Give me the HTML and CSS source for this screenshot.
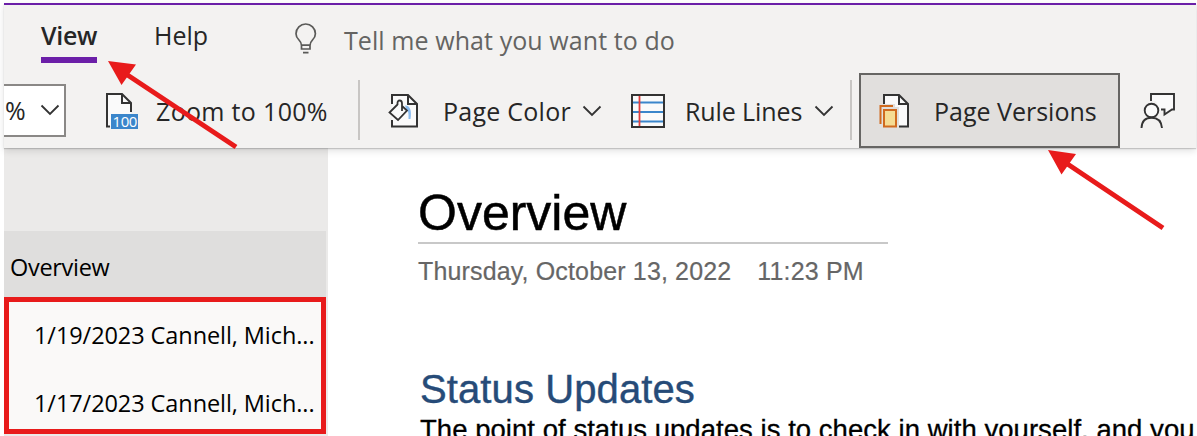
FILE: index.html
```html
<!DOCTYPE html>
<html lang="en">
<head>
<meta charset="utf-8">
<title>Overview</title>
<link rel="stylesheet" href="styles.css">
</head>
<body>
<div class="app">
  <header class="ribbon">
    <nav class="tabs">
      <a class="tab tab-active"><span class="t-view">View</span></a>
      <a class="tab tab-help"><span>Help</span></a>
      <div class="tellme">
        <svg class="bulb" width="24" height="32" viewBox="0 0 24 32" fill="none" stroke="#5a5a58" stroke-width="1.7">
          <path d="M7.500 22.500C7.500 16.500 2 17 2 10.700a9.700 9.700 0 0 1 19.400 0C21.400 17 16 16.500 16 22.500V26H7.500ZM7.500 22.200H16M9 29.700h5.500"/>
        </svg>
        <span class="t-tell">Tell me what you want to do</span>
      </div>
    </nav>
    <div class="toolbar">
      <div class="combo"><span>%</span>
        <svg width="20" height="12" viewBox="0 0 20 12" fill="none" stroke="#333" stroke-width="1.8"><path d="M1.500 1.500L10 10l8.500-8.500"/></svg>
      </div>
      <div class="tool tool-zoom">
        <svg width="34" height="38" viewBox="0 0 34 38" fill="none">
          <path d="M2 34V2H17l9 9V22H7V34Z" fill="#fafafa"/>
          <path d="M5 34.500H2V2H17l9 9V20M17 2V11H26" stroke="#333" stroke-width="2"/>
          <rect x="6" y="22" width="27" height="15" fill="#3b86cb"/>
          <text class="badge" x="7.500" y="35">100</text>
        </svg>
        <span class="t-zoom">Zoom to 100%</span>
      </div>
      <i class="sep"></i>
      <div class="tool tool-color">
        <svg width="32" height="36" viewBox="0 0 32 36" fill="none">
          <path d="M4 2H20l9 9V33H4Z" fill="#fafafa"/>
          <path d="M4 11V2H20l9 9V33.500H4V27M20 2V11H29" stroke="#333" stroke-width="2"/>
          <path d="M9 10L18 10 21.500 17.500 10 28.500 0 19.500Z" fill="#fafafa"/>
          <path d="M17 12.500Q24.500 12.500 22.500 26H20.500Q21 17.500 18.500 17Z" fill="#8abcf0"/>
          <path d="M9.500 11.500L1.500 19.500 10 27l9-9.500-5-4.500M14 18V10.500Q14 7.500 11.700 7.500T9.500 10.500V12" stroke="#333" stroke-width="1.800"/>
        </svg>
        <span class="t-color">Page Color</span>
        <svg class="chev" width="20" height="12" viewBox="0 0 20 12" fill="none" stroke="#333" stroke-width="1.800"><path d="M1.500 1.500L10 10l8.500-8.500"/></svg>
      </div>
      <div class="tool tool-rule">
        <svg width="34" height="34" viewBox="0 0 34 34" fill="none">
          <rect x="1" y="1" width="32" height="32" fill="#fafafa"/>
          <path d="M1 8.500H33M1 18H33M1 27.500H33" stroke="#3b86cb" stroke-width="1.800"/>
          <path d="M8.500 1V33" stroke="#e03c3c" stroke-width="1.800"/>
          <rect x="1" y="1" width="32" height="32" stroke="#333" stroke-width="2"/>
        </svg>
        <span class="t-rule">Rule Lines</span>
        <svg class="chev" width="20" height="12" viewBox="0 0 20 12" fill="none" stroke="#333" stroke-width="1.800"><path d="M1.500 1.500L10 10l8.500-8.500"/></svg>
      </div>
      <i class="sep"></i>
      <button class="versions">
        <svg width="32" height="36" viewBox="0 0 32 36" fill="none">
          <path d="M5 2H20l9 9V33H5Z" fill="#fafafa"/>
          <path d="M5 11V2H20l9 9V33.500H19M20 2V11H29" stroke="#333" stroke-width="2"/>
          <path d="M0 11H16V14H20V35H4V31H0Z" fill="#e1dfdd"/>
          <path d="M1.500 31V13H14" stroke="#d06a1e" stroke-width="2"/>
          <rect x="5" y="17" width="12" height="16.500" fill="#f6dc93" stroke="#d06a1e" stroke-width="2"/>
        </svg>
        <span class="t-vers">Page Versions</span>
      </button>
      <svg class="person" width="36" height="38" viewBox="0 0 36 38" fill="none" stroke="#333" stroke-width="1.900">
        <path d="M11 2H34V18.500H30L24 22V18.500H20L16 9H11Z" fill="#fafafa" stroke="none"/>
        <path d="M11 9V2H34V17.500H32L24.500 22.500V17.500H21"/>
        <circle cx="11.500" cy="18.500" r="6.800" fill="#fafafa"/>
        <path d="M1.500 36Q2 25.800 11.500 25.800T22 36"/>
      </svg>
    </div>
  </header>
  <div class="body">
    <aside class="pages">
      <div class="page page-current"><span>Overview</span></div>
      <div class="history">
        <div class="page"><span>1/19/2023 Cannell, Mich...</span></div>
        <div class="page"><span>1/17/2023 Cannell, Mich...</span></div>
      </div>
    </aside>
    <main class="note">
      <h1>Overview</h1>
      <div class="stamp"><span>Thursday, October 13, 2022</span><span class="time">11:23 PM</span></div>
      <h2>Status Updates</h2>
      <p>The point of status updates is to check in with yourself, and you</p>
    </main>
  </div>
  <svg class="arrows" width="1197" height="436" viewBox="0 0 1197 436" fill="#e81b1b" stroke="#e81b1b">
    <path d="M126 74L236 147M1066 163L1163 228" stroke-width="5"/>
    <path d="M108 61L136 64.500L121.500 85ZM1048 150L1076 154L1061.500 174.500Z" stroke="none"/>
  </svg>
</div>
</body>
</html>
```
FILE: styles.css
```css
* { box-sizing: border-box; }
body { margin: 0; background: #fff; overflow: hidden; }
.app {
  position: relative;
  width: 1197px;
  height: 436px;
  padding: 3px 1px 0 4px;
  display: flex;
  flex-direction: column;
  font-family: "Open Sans", "Noto Sans", sans-serif;
  font-size: 25px;
  color: #262626;
  white-space: nowrap;
  overflow: hidden;
}
svg { display: block; flex: none; }
.ribbon {
  position: relative;
  z-index: 1;
  height: 145px;
  flex: none;
  border-top: 2px solid #6b1fa8;
  background: #f3f2f1;
  box-shadow: 0 1px 1px rgba(0,0,0,.16), 0 3px 7px rgba(0,0,0,.12);
}
.tabs { display: flex; height: 68px; }
.tab { height: 58px; line-height: 34px; padding-top: 13px; }
.tab-active {
  margin-left: 37px;
  width: 56px;
  border-bottom: 6px solid #6b1fa8;
  font-weight: 600;
  letter-spacing: -.3px;
}
.tab-help { margin-left: 57px; width: 82px; }
.tellme { display: flex; color: #646462; }
.bulb { margin: 18px 0 0 58px; }
.tellme span { margin: 18px 0 0 26px; line-height: 34px; letter-spacing: .08px; }
.toolbar { display: flex; align-items: center; height: 75px; }
.combo {
  width: 62px;
  height: 53px;
  margin-bottom: 1px;
  border: 2px solid #8a8886;
  border-left: 0;
  background: #fff;
  display: flex;
  align-items: center;
  gap: 14px;
  padding-left: 1px;
}
.combo span { width: 21px; font-size: 25px; }
.tool { display: flex; align-items: center; }
.tool-zoom { width: 292px; padding-left: 39px; }
.tool-zoom span { margin-left: 17px; letter-spacing: .32px; }
.badge { font: 15px "Open Sans", sans-serif; fill: #fff; letter-spacing: -.4px; }
.sep { width: 2px; height: 60px; margin-bottom: 2px; background: #c8c6c4; flex: none; }
.tool-color { width: 271px; padding-left: 28px; }
.tool-color span { margin-left: 23px; width: 128px; letter-spacing: .25px; }
.chev { margin-left: 12px; }
.tool-color .chev { margin-left: 11px; }
.tool-rule { width: 219px; }
.tool-rule span { margin-left: 20px; width: 117px; letter-spacing: -.1px; }
.versions {
  width: 261px;
  height: 75px;
  margin-left: 7px;
  padding: 0 0 0 18px;
  border: 2px solid #666563;
  background: #e1dfdd;
  display: flex;
  align-items: center;
  font: inherit;
  color: inherit;
}
.versions span { margin-left: 23px; }
.person { margin-left: 20px; }
.body { display: flex; flex: 1; min-height: 0; }
.pages {
  width: 324px;
  padding: 83px 2px 0 0;
  background: #ebeae9;
  color: #000;
  font-size: 23.500px;
  flex: none;
}
.page { height: 68px; display: flex; align-items: center; padding-left: 25px; letter-spacing: -.08px; }
.history .page { padding-bottom: 2px; }
.page-current { background: #dfdedd; height: 66px; padding: 6px 0 0 6px; letter-spacing: -.3px; }
.history {
  height: 137px;
  border: 5px solid #e81b1b;
  background: #faf9f8;
}
.note {
  flex: 1;
  padding-left: 90px;
  font-family: "Liberation Sans", Arial, sans-serif;
  color: #000;
  overflow: hidden;
}
h1 {
  margin: 0;
  width: 470px;
  height: 96px;
  padding-top: 36px;
  border-bottom: 2px solid #c8c8c8;
  font-size: 50px;
  line-height: 58px;
  font-weight: 400;
  -webkit-text-stroke: .5px #000;
}
.stamp { display: flex; gap: 26px; height: 55px; padding-top: 12px; line-height: 30px; font-size: 25px; letter-spacing: .15px; color: #666; -webkit-text-stroke: .2px #666; }
h2 { margin: 67px 0 0 2px; height: 46px; font-size: 40px; line-height: 46px; font-weight: 400; color: #264b78; letter-spacing: .1px; -webkit-text-stroke: .4px #264b78; }
p { margin: 2px 0 0 2px; font-size: 27.500px; line-height: 32px; -webkit-text-stroke: .3px #000; letter-spacing: .04px; }
.arrows { position: absolute; left: 0; top: 0; z-index: 2; }
```
